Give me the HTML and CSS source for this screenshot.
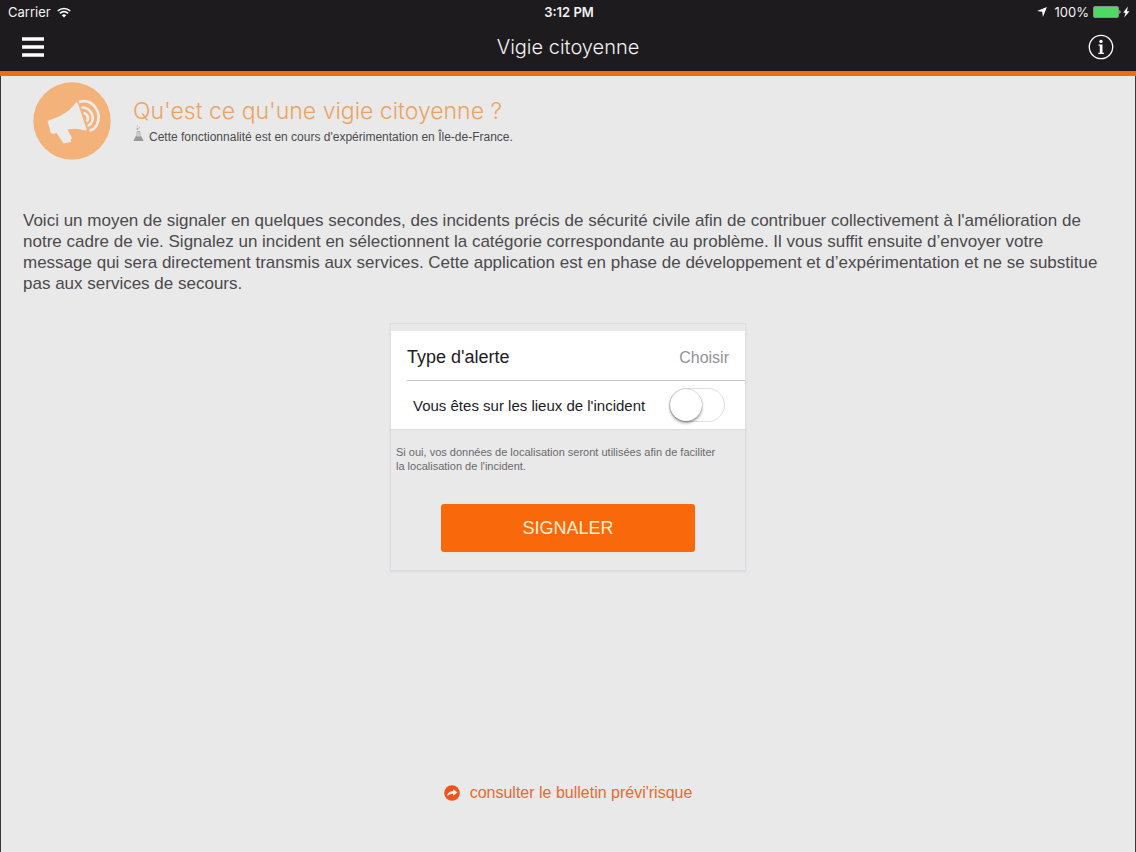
FILE: index.html
```html
<!DOCTYPE html>
<html lang="fr">
<head>
<meta charset="utf-8">
<meta name="viewport" content="width=device-width, initial-scale=1">
<title>Vigie citoyenne</title>
<link rel="stylesheet" href="styles.css">
</head>
<body>
<header class="topbar">
  <div class="status">
    <div class="status-side">
      <span>Carrier</span>
      <svg class="wifi" viewBox="0 0 14 11" width="14" height="11" aria-hidden="true">
        <path d="M.8 4A8.9 8.9 0 0 1 13.200 4M3 6.300a5.800 5.800 0 0 1 8 0" fill="none" stroke="#fff" stroke-width="1.700"/>
        <path d="M7 10.600 4.800 8.300a3.200 3.200 0 0 1 4.400 0z" fill="#fff"/>
      </svg>
    </div>
    <strong class="clock">3:12 PM</strong>
    <div class="status-side status-end">
      <svg class="location" viewBox="0 0 10 10" width="10" height="10" aria-hidden="true"><path d="M9.900.1 5.900 9.900 5.200 4.800.1 4.100z" fill="#fff"/></svg>
      <span>100%</span>
      <svg viewBox="0 0 37 12" width="37" height="12" aria-hidden="true">
        <rect x=".5" y=".5" width="25" height="11" rx="1.500" fill="#4cd964" stroke="#8b8b8d"/>
        <path d="M26.500 4q2 2 0 4z" fill="#fff"/>
        <path d="M34.800.6 30.200 6.800h2.400L31.200 11.400 36.500 5.200H34z" fill="#fff"/>
      </svg>
    </div>
  </div>
  <div class="navbar">
    <button class="icon-button" type="button" aria-label="Menu">
      <svg viewBox="0 0 22 20" width="22" height="20"><path d="M0 2h22M0 10h22M0 18h22" stroke="#fff" stroke-width="3.600"/></svg>
    </button>
    <h1 class="title">Vigie citoyenne</h1>
    <button class="icon-button" type="button" aria-label="Informations">
      <svg viewBox="0 0 26 26" width="26" height="26">
        <circle cx="13" cy="13" r="11.700" fill="none" stroke="#fff" stroke-width="1.300"/>
        <circle cx="13" cy="7.400" r="1.700" fill="#fff"/>
        <path d="M10.500 10.600h4v8.200h1.400v1.100h-5.600v-1.100h1.500v-7.100h-1.300z" fill="#fff"/>
      </svg>
    </button>
  </div>
</header>
<main class="page">
  <section class="hero">
    <svg class="megaphone" viewBox="0 0 78 78" width="78" height="78" aria-hidden="true">
      <circle cx="39" cy="39" r="38.700" fill="#f3b279"/>
      <path d="M14.500 39 27 34Q38 28 42.500 21q1.500-1.500 2.500.5l8.500 25.500q0 2-2 1.500-8-3-17-1l4.500 8.500-1.500 2 .5 2-7.500 1.500-7-10.500-3.500 1-2.500-1.500-1-4.500z" fill="#ecebe9"/>
      <g fill="none" stroke="#ecebe9" stroke-width="2.700">
        <path d="M46 20C60 16 70 31 63.500 43.500Q60.500 48 56.500 48.500"/>
        <path d="M48.500 25.500c9-.5 14 9.500 9.500 16q-1.500 2-3.500 2"/>
        <path d="M50.500 31c4 .5 6 6 3 8.500"/>
      </g>
    </svg>
    <div class="hero-text">
      <h2 class="hero-title">Qu'est ce qu'une vigie citoyenne ?</h2>
      <p class="hero-note">
        <svg viewBox="0 0 11 17" width="11" height="17" aria-hidden="true">
          <path d="M4 6.500v3.500L1 15.500h9L7 10V6.500z" fill="#d2d2d2" stroke="#aaa" stroke-width=".8"/>
          <path d="M2.800 11.500h5.400l2.300 4.500H.5z" fill="#999"/>
          <circle cx="4.500" cy="4" r="1" fill="#aaa"/><circle cx="6.300" cy="2.500" r=".8" fill="#bbb"/><circle cx="4.500" cy="1" r=".7" fill="#bbb"/>
        </svg>
        <span>Cette fonctionnalité est en cours d'expérimentation en Île-de-France.</span>
      </p>
    </div>
  </section>
  <p class="intro">Voici un moyen de signaler en quelques secondes, des incidents précis de sécurité civile afin de contribuer collectivement à l'amélioration de notre cadre de vie. Signalez un incident en sélectionnent la catégorie correspondante au problème. Il vous suffit ensuite d’envoyer votre message qui sera directement transmis aux services. Cette application est en phase de développement et d’expérimentation et ne se substitue pas aux services de secours.</p>
  <form class="card">
    <div class="fields">
      <div class="row row-type">
        <span id="type-label">Type d'alerte</span>
        <button class="choose" type="button" aria-describedby="type-label">Choisir</button>
      </div>
      <div class="row row-place">
        <label for="on-site">Vous êtes sur les lieux de l'incident</label>
        <input class="switch" id="on-site" type="checkbox" role="switch">
      </div>
    </div>
    <p class="hint">Si oui, vos données de localisation seront utilisées afin de faciliter la localisation de l'incident.</p>
    <button class="submit" type="button">SIGNALER</button>
  </form>
  <a class="bulletin" href="#bulletin">
    <svg viewBox="0 0 16 16" width="16" height="16" aria-hidden="true">
      <circle cx="8" cy="8" r="7.800" fill="#ee5619"/>
      <path d="M3 11.200Q3.500 6.200 9 6V4l4.500 3.500L9 10.800V8.700Q5.500 8.500 3 11.200z" fill="#f6ece8"/>
    </svg>
    <span>consulter le bulletin prévi'risque</span>
  </a>
</main>
</body>
</html>
```
FILE: styles.css
```css
* {
  box-sizing: border-box;
}

body {
  margin: 0;
  min-height: 100vh;
  display: flex;
  flex-direction: column;
  background: #eae9ea;
  color: #4b4a4d;
  font-family: "Liberation Sans", Arial, sans-serif;
}

h1, h2, p {
  margin: 0;
  font-weight: 400;
}

button {
  padding: 0;
  border: 0;
  background: none;
  font: inherit;
  cursor: pointer;
}

svg {
  display: block;
  flex: none;
}

.topbar {
  background: #1d1b1e;
  border-bottom: 5px solid #f06c12;
  color: #f2f2f2;
}

.status {
  display: grid;
  grid-template-columns: 1fr auto 1fr;
  align-items: center;
  height: 24px;
  padding: 0 6px 0 8px;
  font: 13px/24px Inter, sans-serif;
}

.status-side {
  display: flex;
  align-items: center;
  gap: 6px;
}

.status-end {
  justify-content: flex-end;
  gap: 4px;
}

.location {
  margin-right: 4px;
}

.clock {
  font-weight: 600;
}

.navbar {
  display: flex;
  align-items: center;
  justify-content: space-between;
  height: 47px;
  padding: 0 22px 2px;
}

.icon-button {
  width: 26px;
}

.title {
  font-family: Inter, sans-serif;
  font-weight: 300;
  font-size: 20px;
  line-height: 24px;
}

.page {
  flex: 1;
  display: flex;
  flex-direction: column;
  padding: 6px 22px 48px;
  border: solid #39383a;
  border-width: 0 1px;
}

.hero {
  display: flex;
  gap: 22px;
  padding-left: 10px;
}

.hero-text {
  padding-top: 15px;
}

.hero-title {
  color: #e9a463;
  font-family: Inter, sans-serif;
  font-weight: 300;
  font-size: 23px;
  line-height: 28px;
}

.hero-note {
  display: flex;
  gap: 5px;
  font-size: 12px;
  line-height: 24px;
}

.intro {
  margin-top: 50px;
  font-size: 17px;
  line-height: 21px;
}

.card {
  width: 356px;
  max-width: 100%;
  margin: 29px auto 0;
  padding: 7px 0 18px;
  border: 1px solid #dddcde;
  box-shadow: 0 1px 2px #d8d7d9;
}

.fields {
  background: #fff;
  color: #1d1c1f;
  border-bottom: 1px solid #dcdcdd;
}

.row {
  display: flex;
  align-items: center;
  justify-content: space-between;
  height: 49px;
  margin-left: 16px;
}

.row-type {
  height: 50px;
  padding: 4px 16px 0 0;
  border-bottom: 1px solid #c5c4c7;
  font-size: 18px;
}

.choose {
  color: #929194;
  font-size: 16px;
}

.row-place {
  height: 48px;
  padding: 0 20px 0 6px;
  font-size: 15px;
}

.switch {
  appearance: none;
  width: 56px;
  height: 34px;
  margin: 0;
  border: 1px solid #dedde0;
  border-radius: 17px;
  background: #fff;
  cursor: pointer;
}

.switch::before {
  content: "";
  display: block;
  width: 32px;
  height: 32px;
  border-radius: 50%;
  background: #fff;
  box-shadow: 0 2px 3px #0006, 0 0 1px #0006;
}

.switch:checked {
  background: #4cd964;
}

.switch:checked::before {
  margin-left: auto;
}

.hint {
  padding: 15px 24px 0 5px;
  font-size: 11px;
  line-height: 14px;
  color: #69686b;
}

.submit {
  display: block;
  width: 254px;
  height: 48px;
  margin: 31px auto 0;
  border-radius: 3px;
  background: #f9690b;
  color: #fff0d2;
  font-size: 18px;
}

.bulletin {
  display: flex;
  align-items: center;
  gap: 10px;
  margin: auto auto 0;
  color: #e86a2c;
  font-size: 16px;
  line-height: 22px;
  text-decoration: none;
}
```
